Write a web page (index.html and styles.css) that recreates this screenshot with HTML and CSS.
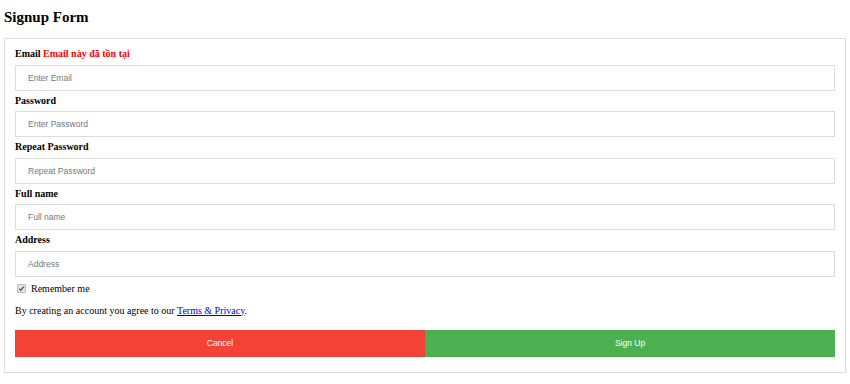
FILE: index.html
```html
<!DOCTYPE html>
<html lang="vi">
<head>
  <meta charset="UTF-8">
  <meta name="viewport" content="width=device-width, initial-scale=1.0">
  <title>Signup Form</title>
  <link rel="stylesheet" href="styles.css">
</head>
<body>
  <h2 class="title">Signup Form</h2>

  <form class="signup-box">
    <label for="email">Email <span class="error">Email này đã tồn tại</span></label>
    <input type="text" id="email" name="email" placeholder="Enter Email">

    <label for="psw">Password</label>
    <input type="password" id="psw" name="psw" placeholder="Enter Password">

    <label for="psw-repeat">Repeat Password</label>
    <input type="password" id="psw-repeat" name="psw-repeat" placeholder="Repeat Password">

    <label for="fullname">Full name</label>
    <input type="text" id="fullname" name="fullname" placeholder="Full name">

    <label for="address">Address</label>
    <input type="text" id="address" name="address" placeholder="Address">

    <div class="remember">
      <span class="check-box">
        <svg width="7" height="7" viewBox="0 0 7 7"><path d="M1.2 3.6 L2.8 5.2 L5.9 1.6" fill="none" stroke="#555" stroke-width="1.3"/></svg>
      </span>
      <span>Remember me</span>
    </div>

    <p class="agree">By creating an account you agree to our <a href="#">Terms &amp; Privacy</a>.</p>

    <div class="buttons">
      <button type="button" class="cancel-btn">Cancel</button>
      <button type="submit" class="signup-btn">Sign Up</button>
    </div>
  </form>
</body>
</html>
```

FILE: styles.css
```css
body {
  margin: 0;
  padding: 4px;
  font-family: "Liberation Serif", "Times New Roman", serif;
  color: #000;
  background: #fff;
}
.title {
  margin: 3px 0 11px;
  font-size: 15px;
  line-height: 20px;
}
/* Form box */
.signup-box {
  border: 1px solid #ddd;
  padding: 8px 10px 15px;
}
.signup-box label {
  display: block;
  font-size: 10px;
  font-weight: bold;
  line-height: 13px;
}
.error {
  color: red;
}
.signup-box input[type="text"],
.signup-box input[type="password"] {
  display: block;
  box-sizing: border-box;
  width: 100%;
  height: 26px;
  margin: 4.5px 0 3px;
  padding: 0 12px;
  border: 1px solid #ddd;
  font-family: "Liberation Sans", Arial, sans-serif;
  font-size: 8.5px;
  outline: none;
}
.signup-box input::placeholder {
  color: #777;
}
.remember {
  display: flex;
  align-items: center;
  gap: 5px;
  margin: 5px 0 0 2px;
  font-size: 10px;
  line-height: 13px;
}
.check-box {
  display: inline-flex;
  width: 7px;
  height: 7px;
  border: 1px solid #bbb;
  background: #e4e4e4;
  border-radius: 1px;
}
.agree {
  margin: 9px 0 13px;
  font-size: 10px;
  line-height: 13px;
}
.agree a {
  color: #00e;
}
.buttons {
  display: flex;
}
.buttons button {
  flex: 1;
  height: 27px;
  border: none;
  color: #fff;
  font-family: "Liberation Sans", Arial, sans-serif;
  font-size: 8.5px;
  cursor: pointer;
}
.cancel-btn {
  background-color: #f44336;
}
.signup-btn {
  background-color: #4caf50;
}
```
